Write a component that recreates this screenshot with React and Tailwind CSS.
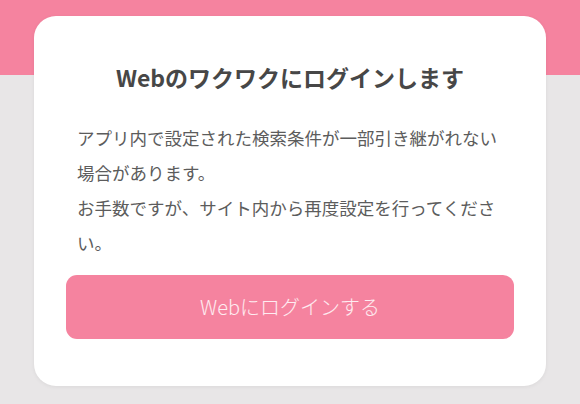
export default function App() {
  return (
    <div
      className="w-[580px] h-[404px] overflow-hidden bg-[linear-gradient(to_bottom,#f5839f_75px,#e8e6e7_75px)] pt-[16px] px-[34px]"
      style={{ fontFamily: '"Noto Sans CJK JP", "Noto Sans", sans-serif' }}
    >
      <div className="bg-white rounded-[22px] shadow-[0_1px_4px_rgba(0,0,0,0.06)] pt-[46px] pb-[47px] px-[32px]">
        <h1 className="text-center text-[23px] leading-[30px] font-bold text-[#474747]">
          Webのワクワクにログインします
        </h1>
        <p className="mt-[28px] px-[11px] text-[17.5px] leading-[35px] text-[#5c5c5c]">
          アプリ内で設定された検索条件が一部引き継がれない場合があります。
          <br />
          お手数ですが、サイト内から再度設定を行ってください。
        </p>
        <button className="mt-[15px] w-full h-[64px] rounded-[11px] bg-[#f5839f] text-[20px] font-light text-white/85 flex items-center justify-center">
          Webにログインする
        </button>
      </div>
    </div>
  );
}
